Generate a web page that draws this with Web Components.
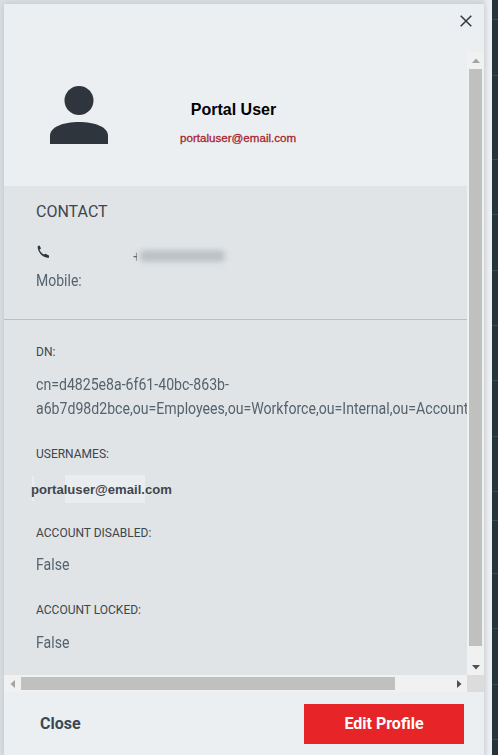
<!DOCTYPE html>
<html lang="en">
<head>
<meta charset="utf-8">
<title>Portal User</title>
<style>
  html, body { margin: 0; height: 100%; overflow: hidden; }
  body { background: #d9dfe2; font-family: Roboto, "Liberation Sans", sans-serif; }
</style>
</head>
<body>
<profile-modal>
  <profile-head slot="head" name="Portal User" email="portaluser@email.com"></profile-head>
  <contact-section slot="body"></contact-section>
  <info-field slot="body" label="DN:" top="25" gap="14">cn=d4825e8a-6f61-40bc-863b-a6b7d98d2bce,ou=Employees,ou=Workforce,ou=Internal,ou=Account</info-field>
  <user-names slot="body" value="portaluser@email.com"></user-names>
  <info-field slot="body" label="ACCOUNT DISABLED:" top="23" gap="13">False</info-field>
  <info-field slot="body" label="ACCOUNT LOCKED:" top="26" gap="14">False</info-field>
</profile-modal>

<script>
// faint row lines of the page behind the dialog
const stripLines = [19, 75, 159, 214, 270, 325, 380, 436, 491, 520, 573, 628, 684, 739];

class ProfileModal extends HTMLElement {
  connectedCallback() {
    const lines = stripLines.map(y => `linear-gradient(#3a4b54,#3a4b54) 0 ${y}px / 100% 1px no-repeat`).join(',');
    this.attachShadow({ mode: 'open' });
    this.shadowRoot.innerHTML = `
      <style>
        :host { display: flex; height: 755px; width: 498px; }
        .shade { flex: 1; padding: 4px 0 0 4px; background: linear-gradient(90deg, #d9dfe2 0, #d9dfe2 484px, #dfe4e8 484px, #ebeff2 489px, #ebeff2 492px); min-width: 0; }
        .strip { width: 6px; background: ${lines}, #26343c; }
        .modal { width: 480px; height: 751px; background: #ebeff2; display: grid; grid-template-rows: 48px 640px 63px; box-shadow: 0 0 6px rgba(60,70,80,.18); }
        .top { display: flex; justify-content: flex-end; padding: 11px 12px 0 0; }
        .top svg { width: 12px; height: 12px; display: block; }
        .scroller { display: grid; grid-template-columns: 463px 17px; grid-template-rows: 623px 17px; }
        .view { overflow: hidden; background: #e0e4e7; }
        .corner { background: #dcdcdc; }
        .foot { display: flex; justify-content: space-between; align-items: flex-start; padding: 12px 20px 0 36px; }
        button { font: 700 16px/40px Roboto, sans-serif; border: 0; height: 40px; padding: 0; cursor: pointer; }
        .close { background: none; color: #3b4852; }
        .edit { width: 160px; background: #e72528; color: #fff; }
      </style>
      <div class="shade">
        <div class="modal">
          <div class="top">
            <svg viewBox="0 0 12 12"><path d="M.7.7l10.6 10.6M11.3.7L.7 11.3" stroke="#2f3740" stroke-width="1.5" fill="none"/></svg>
          </div>
          <div class="scroller">
            <div class="view"><slot name="head"></slot><slot name="body"></slot></div>
            <fake-scroll dir="v"></fake-scroll>
            <fake-scroll dir="h"></fake-scroll>
            <div class="corner"></div>
          </div>
          <div class="foot">
            <button class="close">Close</button>
            <button class="edit">Edit Profile</button>
          </div>
        </div>
      </div>
      <div class="strip"></div>`;
  }
}

class FakeScroll extends HTMLElement {
  connectedCallback() {
    const v = this.getAttribute('dir') === 'v';
    this.attachShadow({ mode: 'open' });
    this.shadowRoot.innerHTML = `
      <style>
        :host { display: flex; background: #f1f1f1; flex-direction: ${v ? 'column' : 'row'}; }
        .btn { flex: none; ${v ? 'height: 17px' : 'width: 17px'}; display: flex; align-items: center; justify-content: center; }
        .track { flex: 1; display: flex; flex-direction: ${v ? 'column' : 'row'}; padding: ${v ? '0 2px' : '2px 0'}; }
        .thumb { background: #c0c0bf; ${v ? 'height: 577px; margin-bottom: auto' : 'width: 374px; margin-right: auto'}; }
        svg { width: 8px; height: 8px; display: block; }
      </style>
      <div class="btn"><svg viewBox="0 0 8 8"><path d="${v ? 'M4 1.5L8 6H0z' : 'M1.5 4L6 0v8z'}" fill="#a3a3a3"/></svg></div>
      <div class="track"><div class="thumb"></div></div>
      <div class="btn"><svg viewBox="0 0 8 8"><path d="${v ? 'M4 6.5L0 2h8z' : 'M6.5 4L2 0v8z'}" fill="#505050"/></svg></div>`;
  }
}

class ProfileHead extends HTMLElement {
  connectedCallback() {
    this.attachShadow({ mode: 'open' });
    this.shadowRoot.innerHTML = `
      <style>
        :host { display: flex; height: 134px; background: #ebeff2; box-sizing: border-box; padding: 34px 0 0 46px; }
        svg { width: 58px; height: 58px; flex: none; display: block; }
        .who { margin-left: 72px; width: 120px; text-align: center; font-family: "Liberation Sans", Arial, sans-serif; }
        .name { font-size: 16px; font-weight: 700; line-height: 18px; margin-top: 15px; color: #000; padding-right: 13px; }
        .mail { font-size: 11.6px; font-weight: 400; line-height: 14px; margin-top: 12px; color: #a91f2e; white-space: nowrap; -webkit-text-stroke: .3px #a91f2e; padding-right: 4px; }
      </style>
      <svg viewBox="0 0 58 58"><circle cx="29" cy="14.5" r="14.5" fill="#2f353d"/><path d="M0 58V50C0 41 13 36 29 36S58 41 58 50V58Z" fill="#2f353d"/></svg>
      <div class="who">
        <div class="name">${this.getAttribute('name')}</div>
        <div class="mail">${this.getAttribute('email')}</div>
      </div>`;
  }
}

class ContactSection extends HTMLElement {
  connectedCallback() {
    this.attachShadow({ mode: 'open' });
    this.shadowRoot.innerHTML = `
      <style>
        :host { display: block; height: 134px; box-sizing: border-box; padding: 16px 0 0 32px; border-bottom: 1px solid #b9c0c4; }
        h3 { margin: 0; font: 400 16px/19px Roboto, sans-serif; color: #3d464d; }
        .row { display: grid; grid-template-columns: 97px 1fr; margin-top: 24px; }
        svg { width: 14px; height: 14px; display: block; margin-bottom: 12px; }
        .lab { font: 400 16px/20px Roboto, sans-serif; color: #55636e; transform: scaleX(.875); transform-origin: 0 0; }
        .val { position: relative; font: 400 14px/20px Roboto, sans-serif; color: #55636e; margin-top: 2px; }
        .mask { position: absolute; left: 4px; top: -3px; width: 95px; height: 22px; background: linear-gradient(90deg, #e4e7ea 92%, #e0e4e7); }
        .mask i { position: absolute; left: 3px; top: 6px; width: 85px; height: 12px; background: #b9c0c3; filter: blur(3px); }
      </style>
      <h3>CONTACT</h3>
      <div class="row">
        <div>
          <svg viewBox="0 0 14 14"><path d="M1.6 1.2L3.6.4 5 3.6 3.4 4.8C4.4 6.8 6 8.6 8 9.6L9.4 8.8 13 10.4V12.8H11.4C6 12 1.6 7 1.6 1.2Z" fill="#2f353d"/></svg>
          <div class="lab">Mobile:</div>
        </div>
        <div class="val">+<span class="mask"><i></i></span></div>
      </div>`;
  }
}

const fieldStyle = `
  :host { display: block; padding: 0 0 0 32px; }
  .k { font: 400 12px/14px Roboto, sans-serif; color: #3d464d; }
`;

class InfoField extends HTMLElement {
  connectedCallback() {
    this.attachShadow({ mode: 'open' });
    this.shadowRoot.innerHTML = `
      <style>
        ${fieldStyle}
        :host { margin-top: ${this.getAttribute('top')}px; }
        .v { font: 400 16px/24px Roboto, sans-serif; color: #55636e; margin-top: ${this.getAttribute('gap')}px; width: 494px; transform: scaleX(.882); transform-origin: 0 0; }
      </style>
      <div class="k">${this.getAttribute('label')}</div>
      <div class="v"><slot></slot></div>`;
  }
}

class UserNames extends HTMLElement {
  connectedCallback() {
    this.attachShadow({ mode: 'open' });
    this.shadowRoot.innerHTML = `
      <style>
        ${fieldStyle}
        :host { margin-top: 26px; }
        .box { position: relative; height: 28px; margin: 14px 0 0 -5px; }
        .box i { position: absolute; background: #e9edf0; }
        .a { left: 1px; top: 1px; width: 2px; height: 25px; }
        .b { left: 34px; top: 0; width: 80px; height: 28px; }
        .v { position: relative; font: 700 13.1px/30px "Liberation Sans", Arial, sans-serif; color: #3f464d; }
      </style>
      <div class="k">USERNAMES:</div>
      <div class="box"><i class="a"></i><i class="b"></i><div class="v">${this.getAttribute('value')}</div></div>`;
  }
}

customElements.define('fake-scroll', FakeScroll);
customElements.define('profile-head', ProfileHead);
customElements.define('contact-section', ContactSection);
customElements.define('info-field', InfoField);
customElements.define('user-names', UserNames);
customElements.define('profile-modal', ProfileModal);
</script>
</body>
</html>
